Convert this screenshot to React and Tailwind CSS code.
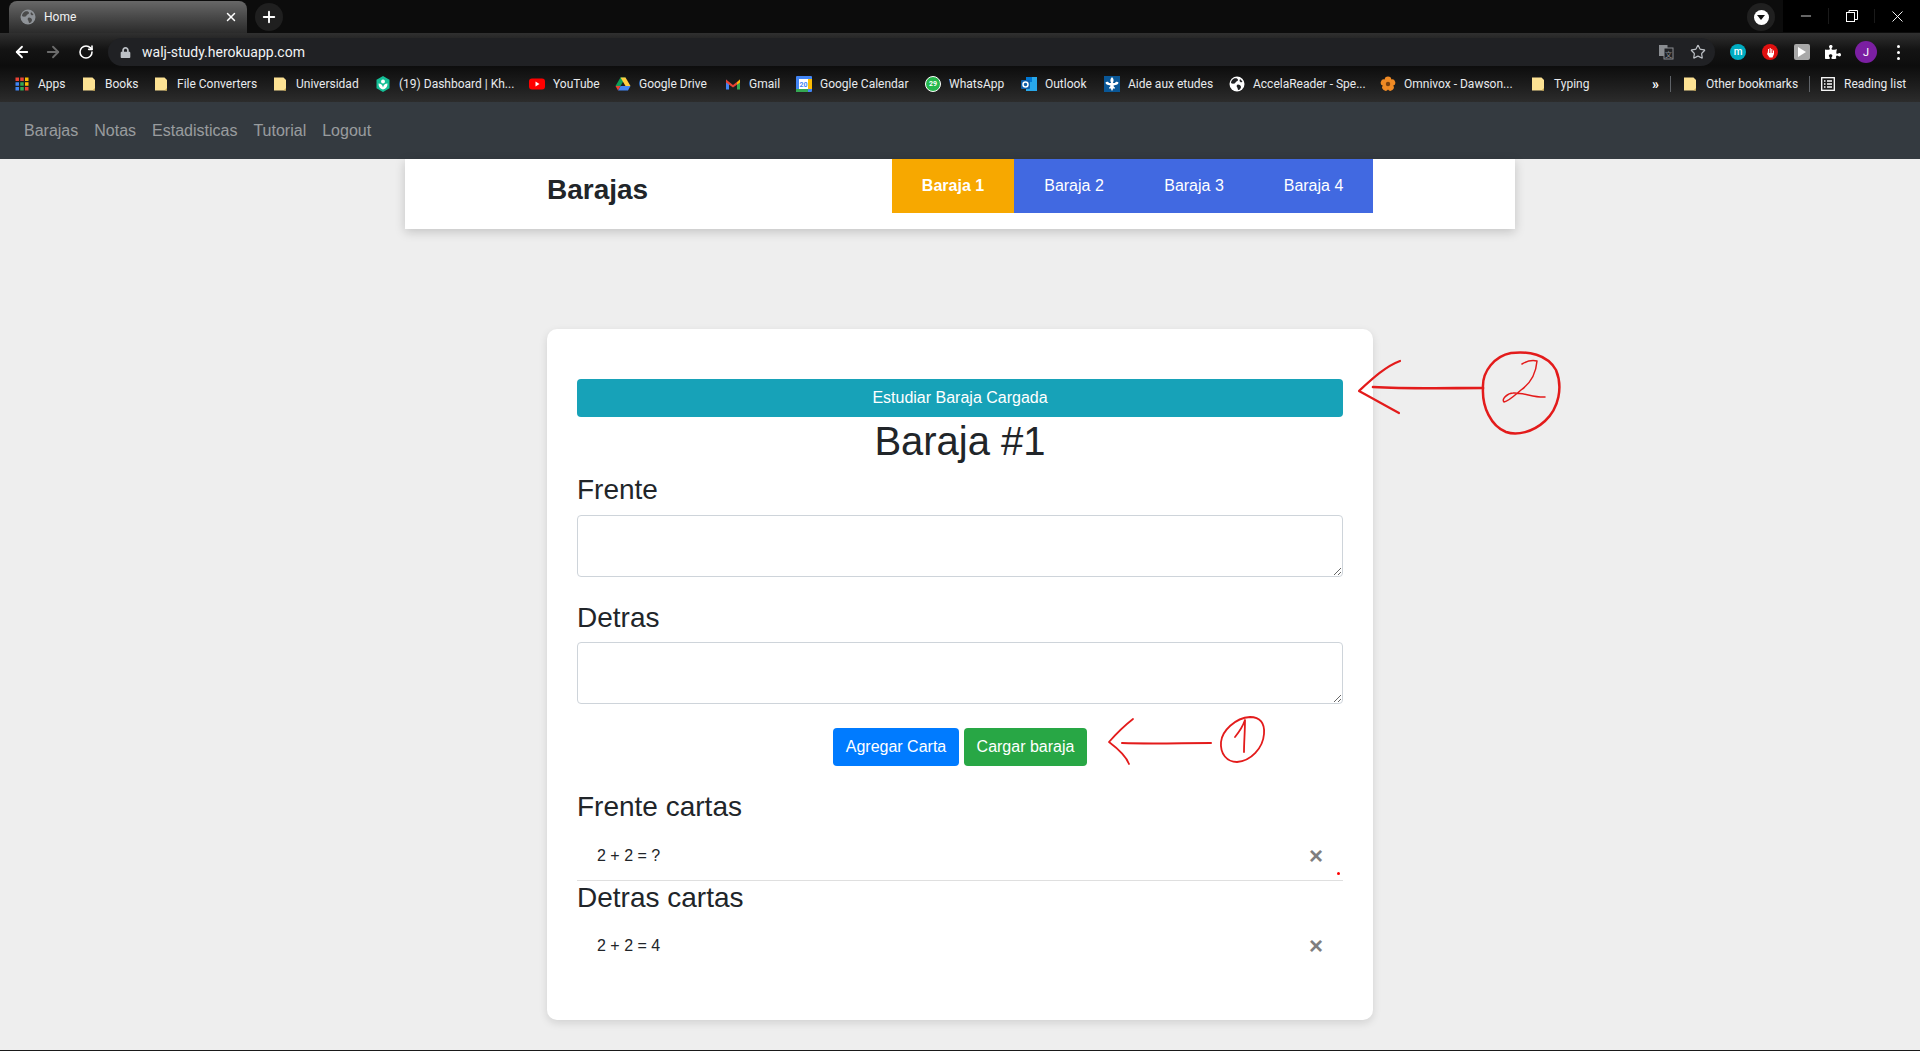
import { ArrowLeft, ArrowRight, Minus, Plus, RotateCw, Star, X } from 'lucide-react';
import { FaLock, FaPuzzlePiece } from 'react-icons/fa';

const chromeFont = 'font-["Roboto",sans-serif]';

function Folder() {
  return (
    <svg width="16" height="16" viewBox="0 0 16 16">
      <path d="M2 1.500h9.500L14 4v10.500H2z" fill="#fde293" />
      <path d="M11.500 14.500l2.500-2.500v2.500z" fill="#c9a94f" />
    </svg>
  );
}

function AppsIcon() {
  const colors = ['#ea4335', '#ea4335', '#fbbc04', '#4285f4', '#34a853', '#fbbc04', '#4285f4', '#34a853', '#ea4335'];
  return (
    <svg width="16" height="16" viewBox="0 0 16 16">
      {colors.map((c, i) => (
        <rect key={i} x={1.5 + (i % 3) * 4.75} y={1.5 + Math.floor(i / 3) * 4.75} width="3.5" height="3.5" fill={c} />
      ))}
    </svg>
  );
}

function TabGlobe() {
  return (
    <svg width="16" height="16" viewBox="0 0 16 16">
      <circle cx="8" cy="8" r="7.500" fill="#8f9398" />
      <path d="M5 2.500c2-.5 4 0 4 1.500s-2 1-2.500 2.500S3 8 2 7c0-2 1.500-4 3-4.500zM9 8.500c1.500 0 3 1 3 2.500s-1.500 3-2.500 3-.5-2-1.500-3 0-2.500 1-2.500zM11 3l2.500 2.500-1.500 1-1.500-1.500z" fill="#4a4a4a" />
    </svg>
  );
}

function KhanIcon() {
  return (
    <svg width="16" height="16" viewBox="0 0 16 16">
      <path d="M8 0l6.500 3.700v8.600L8 16l-6.500-3.700V3.700z" fill="#14bf96" />
      <circle cx="8" cy="5.500" r="2" fill="#fff" />
      <path d="M3.500 7.500c2.500 0 4 1.500 4.500 4 .5-2.500 2-4 4.500-4 0 3-1.500 5.500-4.500 6-3-.5-4.500-3-4.500-6z" fill="#fff" />
    </svg>
  );
}

function YoutubeIcon() {
  return (
    <svg width="16" height="16" viewBox="0 0 16 16">
      <rect y="2.500" width="16" height="11" rx="3" fill="#ff0000" />
      <path d="M6.500 5.500l4 2.500-4 2.500z" fill="#fff" />
    </svg>
  );
}

function DriveIcon() {
  return (
    <svg width="16" height="16" viewBox="0 0 16 16">
      <path d="M5.500 1.500h5l-5 8.500H.500z" fill="#0f9d58" />
      <path d="M10.500 1.500l5 8.500h-5l-5-8.500z" fill="#ffcd40" />
      <path d="M3 14.500l2.500-4.500h10l-2.500 4.500z" fill="#4285f4" />
      <path d="M.500 10h5L3 14.500z" fill="#ea4335" />
    </svg>
  );
}

function GmailIcon() {
  return (
    <svg width="16" height="16" viewBox="0 0 16 16">
      <path d="M1 3.500v10h3V7z" fill="#4285f4" />
      <path d="M15 3.500v10h-3V7z" fill="#34a853" />
      <path d="M1 3.500L8 9l7-5.500v3L8 11.500 1 6.500z" fill="#ea4335" />
      <path d="M12 6.500l3-3v3l-3 2z" fill="#fbbc04" />
    </svg>
  );
}

function CalendarIcon() {
  return (
    <svg width="16" height="16" viewBox="0 0 16 16">
      <rect width="16" height="16" rx="1" fill="#4285f4" />
      <rect x="12" y="3" width="4" height="10" fill="#fbbc04" />
      <rect y="13" width="12" height="3" fill="#34a853" />
      <rect x="3" y="3" width="9" height="10" fill="#fff" />
      <text x="7.500" y="11" textAnchor="middle" fontSize="7" fontWeight="700" fill="#4285f4" fontFamily="Roboto">20</text>
    </svg>
  );
}

function OutlookIcon() {
  return (
    <svg width="16" height="16" viewBox="0 0 16 16">
      <rect x="5" y="1" width="11" height="14" fill="#28a8ea" />
      <rect x="5" y="1" width="6" height="5" fill="#0078d4" />
      <rect y="4" width="9" height="9" rx="1" fill="#0f5ea8" />
      <circle cx="4.500" cy="8.500" r="2.500" fill="none" stroke="#fff" strokeWidth="1.500" />
    </svg>
  );
}

function QuebecIcon() {
  return (
    <svg width="16" height="16" viewBox="0 0 16 16">
      <rect width="16" height="16" fill="#095797" />
      <path d="M8 1c2 2 2 4 .8 6h2.200c.5-1.500 2.500-1.800 3.500-.5 0 1.500-1.500 2.500-3 2.500l-2 .5.500 1.500 1 .5v1H9l-.5 2h-1L7 12.500H5v-1l1-.5.500-1.500-2-.5c-1.500 0-3-1-3-2.500 1-1.300 3-1 3.500.5h2.200C6 5 6 3 8 1z" fill="#fff" />
    </svg>
  );
}

function GlobeFilled() {
  return (
    <svg width="16" height="16" viewBox="0 0 16 16">
      <circle cx="8" cy="8" r="7.500" fill="#fff" />
      <path d="M5 2.500c2-.5 4 0 4 1.500s-2 1-2.500 2.500S3 8 2 7c0-2 1.500-4 3-4.500zM9 8.500c1.500 0 3 1 3 2.500s-1.500 3-2.500 3-.5-2-1.500-3 0-2.500 1-2.500zM11 3l2.500 2.500-1.500 1-1.500-1.500z" fill="#202124" />
    </svg>
  );
}

function FlowerIcon() {
  return (
    <svg width="16" height="16" viewBox="0 0 16 16">
      {[0, 72, 144, 216, 288].map((a) => (
        <circle key={a} cx="8" cy="3.800" r="3.300" fill="#f08a24" transform={`rotate(${a} 8 8)`} />
      ))}
      <circle cx="8" cy="8" r="2.200" fill="#7a4110" />
    </svg>
  );
}

function ReadingIcon() {
  return (
    <svg width="16" height="16" viewBox="0 0 16 16" fill="none" stroke="#fff" strokeWidth="1.300">
      <rect x="1.700" y="1.700" width="12.600" height="12.600" />
      <path d="M4 5h1.500M7 5h5M4 8h1.500M7 8h5M4 11h1.500M7 11h5" />
    </svg>
  );
}

const bookmarks = [
  { label: 'Apps', icon: <AppsIcon />, width: 'w-[67px]' },
  { label: 'Books', icon: <Folder />, width: 'w-[72px]' },
  { label: 'File Converters', icon: <Folder />, width: 'w-[119px]' },
  { label: 'Universidad', icon: <Folder />, width: 'w-[103px]' },
  { label: '(19) Dashboard | Kh...', icon: <KhanIcon />, width: 'w-[154px]' },
  { label: 'YouTube', icon: <YoutubeIcon />, width: 'w-[86px]' },
  { label: 'Google Drive', icon: <DriveIcon />, width: 'w-[110px]' },
  { label: 'Gmail', icon: <GmailIcon />, width: 'w-[71px]' },
  { label: 'Google Calendar', icon: <CalendarIcon />, width: 'w-[129px]' },
  {
    label: 'WhatsApp',
    icon: (
      <span className="flex h-4 w-4 items-center justify-center rounded-full border-[1.5px] border-white bg-[#25b84c]">
        <span className="text-[7px] font-bold leading-none text-white">29</span>
      </span>
    ),
    width: 'w-[96px]',
  },
  { label: 'Outlook', icon: <OutlookIcon />, width: 'w-[83px]' },
  { label: 'Aide aux etudes', icon: <QuebecIcon />, width: 'w-[125px]' },
  { label: 'AccelaReader - Spe...', icon: <GlobeFilled />, width: 'w-[151px]' },
  { label: 'Omnivox - Dawson...', icon: <FlowerIcon />, width: 'w-[150px]' },
  { label: 'Typing', icon: <Folder />, width: 'w-[100px]' },
];

function Bookmark({ label, icon, width }) {
  return (
    <div className={`flex shrink-0 items-center gap-2 ${width}`}>
      <span className="flex h-4 w-4 shrink-0 items-center justify-center">{icon}</span>
      <span className="whitespace-nowrap text-xs text-[#e8eaed]">{label}</span>
    </div>
  );
}

function BrowserChrome() {
  return (
    <div className={chromeFont}>
      {/* Tab strip */}
      <div className="flex h-[33px] bg-[#0c0c0c]">
        <div className="ml-[9px] mt-[1px] flex h-[32px] w-[238px] items-center rounded-t-lg bg-gradient-to-b from-[#686868] to-[#2b2b2b] pl-[11px] pr-[9px] text-white">
          <TabGlobe />
          <span className="ml-2 text-xs text-[#f1f3f4]">Home</span>
          <X size={14} strokeWidth={2.5} className="ml-auto text-white" />
        </div>
        <div className="ml-2 mt-[3px] flex h-7 w-7 items-center justify-center rounded-full bg-[#1f1f1f]">
          <Plus size={18} strokeWidth={2.5} className="text-white" />
        </div>
        <div className="ml-auto mr-[8px] mt-[3px] flex h-[28px] w-[28px] items-center justify-center rounded-full bg-[#202020]">
          <span className="flex h-[15px] w-[15px] items-center justify-center rounded-full bg-white">
            <span className="border-x-[4px] border-t-[5px] border-x-transparent border-t-[#111]" />
          </span>
        </div>
        <div className="flex h-[32px] w-[137px] items-center bg-black text-white">
          <div className="flex w-[46px] justify-center border-r border-[#1a1a1a]"><Minus size={16} strokeWidth={1.2} /></div>
          <div className="flex w-[46px] justify-center border-r border-[#1a1a1a]">
            <svg width="14" height="14" viewBox="0 0 14 14" fill="none" stroke="#fff" strokeWidth="1">
              <rect x="1.500" y="3.500" width="8" height="9" />
              <path d="M4 3.500V1.500h8.500v9h-3" />
            </svg>
          </div>
          <div className="flex w-[45px] justify-center"><X size={19} strokeWidth={1.2} /></div>
        </div>
      </div>

      {/* Toolbar */}
      <div className="flex h-[33px] items-end bg-gradient-to-b from-[#303030] via-[#141414] to-[#0d0d0d]">
        <div className="flex h-[28px] w-[108px] items-center">
          <ArrowLeft size={18} strokeWidth={2.4} className="ml-[13px] text-white" />
          <ArrowRight size={18} strokeWidth={2.4} className="ml-[13px] text-[#6b6b6b]" />
          <RotateCw size={16} strokeWidth={2.4} className="ml-[16px] text-white" />
        </div>
        <div className="flex h-[28px] w-[1607px] items-center rounded-full bg-[#202124] pl-[12px] pr-[9px]">
          <FaLock size={11} className="text-[#bdc1c6]" />
          <span className="ml-[11px] text-sm text-[#f1f3f4]">walj-study.herokuapp.com</span>
          <svg width="16" height="16" viewBox="0 0 16 16" className="ml-auto" fill="none">
            <rect x="1" y="1" width="8.500" height="11" fill="#8a8d91" />
            <rect x="6" y="4" width="9" height="11" stroke="#8a8d91" strokeWidth="1" fill="#202124" />
            <text x="10.500" y="12.500" fontSize="7" textAnchor="middle" fill="#8a8d91" fontFamily="Noto Sans CJK SC">文</text>
          </svg>
          <Star size={16} strokeWidth={1.8} className="ml-[16px] text-[#bdc1c6]" />
        </div>
        <div className="flex h-[28px] flex-1 items-center text-white">
          <span className="ml-[15px] flex h-4 w-4 items-center justify-center rounded-full bg-[#00acc1] text-[10px] font-medium leading-none">m</span>
          <span className="ml-4 flex h-4 w-4 items-center justify-center rounded-full bg-[#e01010]">
            <svg width="10" height="11" viewBox="0 0 10 11"><path d="M2 3.500v3.500l2.500 3.500h3L9 7V3.500H8V6H7.300V2H6.300v4h-.600V1H4.700v5H4V2H3v4.500H2.500z" fill="#fff" /></svg>
          </span>
          <span className="ml-4 flex h-4 w-4 items-center justify-center rounded-[2px] bg-[#a8a8a8]">
            <span className="border-y-[5px] border-l-[8px] border-y-transparent border-l-white" />
          </span>
          <FaPuzzlePiece size={16} className="ml-[15px] text-white" />
          <span className="ml-[14px] flex h-[22px] w-[22px] items-center justify-center rounded-full bg-[#7b1fa2] text-[11px] leading-none">J</span>
          <span className="ml-[20px] flex flex-col gap-[3px]">
            <span className="h-[3px] w-[3px] rounded-full bg-white" />
            <span className="h-[3px] w-[3px] rounded-full bg-white" />
            <span className="h-[3px] w-[3px] rounded-full bg-white" />
          </span>
        </div>
      </div>

      {/* Bookmarks bar */}
      <div className="flex h-[36px] items-center bg-gradient-to-b from-[#0d0d0d] to-[#2c2c2c] pl-[14px]">
        {bookmarks.map((b) => (
          <Bookmark key={b.label} {...b} />
        ))}
        <span className="ml-[22px] text-sm font-bold leading-none text-white">»</span>
        <span className="ml-[11px] h-4 w-px bg-[#5f6368]" />
        <div className="ml-[11px] flex w-[127px] items-center gap-2">
          <Folder />
          <span className="whitespace-nowrap text-xs text-[#e8eaed]">Other bookmarks</span>
        </div>
        <span className="h-4 w-px bg-[#5f6368]" />
        <div className="ml-[10px] flex items-center gap-2">
          <ReadingIcon />
          <span className="whitespace-nowrap text-xs text-[#e8eaed]">Reading list</span>
        </div>
      </div>
    </div>
  );
}

function Navbar() {
  const links = ['Barajas', 'Notas', 'Estadisticas', 'Tutorial', 'Logout'];
  return (
    <nav className="flex h-[57px] items-center bg-[#343a40] px-4">
      {links.map((l) => (
        <a key={l} href="#" className="px-2 text-base text-white/50">
          {l}
        </a>
      ))}
    </nav>
  );
}

function CardItem({ text, border }) {
  return (
    <div className={`flex h-[49px] items-center justify-between pl-5 pr-5 text-base text-[#212529] ${border ? 'border-b border-[#dfdfdf]' : ''}`}>
      <span>{text}</span>
      <span className="text-2xl font-bold leading-none text-[#7f7f7f]">×</span>
    </div>
  );
}

function ArrowTwo() {
  return (
    <svg className="absolute left-[1350px] top-[345px]" width="220" height="95" viewBox="1350 345 220 95" fill="none" stroke="#e31b1b" strokeWidth="2.200" strokeLinecap="round" strokeLinejoin="round">
      <path d="M1400 361c-14 5-28 18-41 30 13 7 27 15 40 22" />
      <path d="M1373 387c35 2 75 1 110 1" strokeWidth="2.600" />
      <path d="M1483 388c-1-17 12-32 28-35 17-2 36 1 45 17 7 17 3 38-11 51-12 11-28 15-39 11-15-6-24-25-23-44z" strokeWidth="2.500" />
      <path d="M1522 364c5-3 11-4 15-3-1 12-6 22-16 29-6 5-12 11-17 12-3-3 4-9 9-9 9-1 22 5 32 4" strokeWidth="1.500" />
    </svg>
  );
}

function ArrowOne() {
  return (
    <svg className="absolute left-[1100px] top-[710px]" width="175" height="65" viewBox="1100 710 175 65" fill="none" stroke="#e31b1b" strokeWidth="1.800" strokeLinecap="round" strokeLinejoin="round">
      <path d="M1133 719c-9 7-17 15-24 23 8 6 17 14 20 22" />
      <path d="M1122 743c30 1 60 0 89 0" strokeWidth="2" />
      <path d="M1221 742c1-11 14-24 29-25 10 0 15 6 14 17-1 14-13 27-27 28-10 0-17-8-16-20z" />
      <path d="M1235 737c4-5 8-11 10-17 0 11-1 22-1 32" />
    </svg>
  );
}

export default function App() {
  return (
    <div className="relative h-[1051px] overflow-hidden bg-[#eeeeee] font-['Liberation_Sans',sans-serif] text-[#212529]">
      <BrowserChrome />
      <Navbar />

      {/* Header */}
      <div className="mx-auto flex h-[70px] w-[1110px] items-start justify-between bg-white pl-[142px] pr-[142px] shadow-[0_3px_10px_rgba(0,0,0,0.18)]">
        <h2 className="mt-[14px] text-[28px] font-bold leading-[34px]">Barajas</h2>
        <div className="flex h-[54px] text-base text-white">
          <div className="flex w-[122px] items-center justify-center bg-[#f7a800] font-bold">Baraja 1</div>
          <div className="flex w-[120px] items-center justify-center bg-[#4169e1]">Baraja 2</div>
          <div className="flex w-[120px] items-center justify-center bg-[#4169e1]">Baraja 3</div>
          <div className="flex w-[119px] items-center justify-center bg-[#4169e1]">Baraja 4</div>
        </div>
      </div>

      {/* Card */}
      <div className="mx-auto mt-[100px] h-[691px] w-[826px] rounded-[10px] bg-white px-[30px] pt-[50px] shadow-[0_3px_8px_rgba(0,0,0,0.12)]">
        <button className="block h-[38px] w-full rounded bg-[#17a2b8] text-base text-white">Estudiar Baraja Cargada</button>
        <h1 className="text-center text-[40px] leading-[48px]">Baraja #1</h1>
        <h3 className="mt-2 text-[28px] leading-[34px]">Frente</h3>
        <textarea className="mt-2 block h-[62px] w-full rounded border border-[#ced4da] bg-white" />
        <h3 className="mt-6 text-[28px] leading-[34px]">Detras</h3>
        <textarea className="mt-[7px] block h-[62px] w-full rounded border border-[#ced4da] bg-white" />
        <div className="mt-6 flex justify-center gap-[5px] text-base text-white">
          <button className="h-[38px] w-[126px] rounded bg-[#007bff]">Agregar Carta</button>
          <button className="h-[38px] w-[123px] rounded bg-[#28a745]">Cargar baraja</button>
        </div>
        <h3 className="mt-6 text-[28px] leading-[34px]">Frente cartas</h3>
        <div className="mt-2">
          <CardItem text="2 + 2 = ?" border />
        </div>
        <h3 className="text-[28px] leading-[34px]">Detras cartas</h3>
        <div className="mt-[6px]">
          <CardItem text="2 + 2 = 4" />
        </div>
      </div>

      {/* Red ink annotations */}
      <ArrowTwo />
      <ArrowOne />
      <span className="absolute left-[1337px] top-[872px] h-[3px] w-[3px] rounded-full bg-[#ff0000]" />
      <div className="absolute bottom-0 left-0 h-px w-full bg-[#1a1a1a]" />
    </div>
  );
}
